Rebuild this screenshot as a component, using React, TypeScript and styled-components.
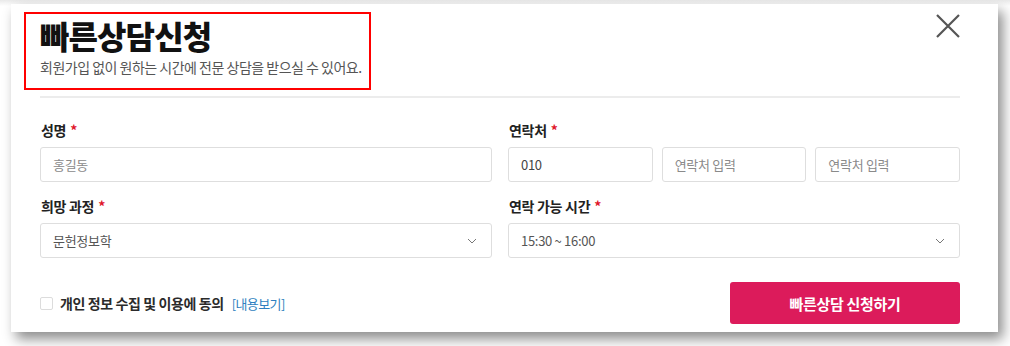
import React from "react";
import styled, { createGlobalStyle } from "styled-components";

const GlobalStyle = createGlobalStyle`
  html, body {
    margin: 0;
    padding: 0;
    background: #ffffff;
    font-family: "Noto Sans CJK KR", "Noto Sans", sans-serif;
  }
  * { box-sizing: border-box; }
`;

const Page = styled.div`
  width: 1010px;
  height: 346px;
  padding: 4px 0 0 11px;
  background: linear-gradient(180deg, #e9e9e9 0px, #ffffff 6px);
`;

const Modal = styled.div`
  position: relative;
  width: 987px;
  height: 328px;
  background: #ffffff;
  padding: 8px 38px 0 29px;
  box-shadow: 5px 7px 12px rgba(0, 0, 0, 0.45);
`;

const Header = styled.div`
  width: 347px;
  height: 78px;
  margin-left: -16px;
  padding: 1px 0 0 14px;
  border: 2px solid #ff0000;
`;

const Title = styled.h2`
  margin: 0;
  font-size: 32px;
  line-height: 40px;
  font-weight: 900;
  letter-spacing: -0.9px;
  color: #111111;
`;

const Subtitle = styled.p`
  margin: 2px 0 0;
  font-size: 14px;
  line-height: 20px;
  letter-spacing: -0.5px;
  color: #555555;
`;

const CloseButton = styled.button`
  position: absolute;
  top: 8px;
  right: 36px;
  width: 28px;
  height: 28px;
  padding: 0;
  border: 0;
  background: none;
  display: flex;
  align-items: center;
  justify-content: center;
`;

const Divider = styled.hr`
  margin: 6px 0 0;
  border: 0;
  border-top: 2px solid #ececec;
`;

const Grid = styled.div`
  display: grid;
  grid-template-columns: 1fr 1fr;
  column-gap: 16px;
  row-gap: 14px;
  margin-top: 22px;
`;

const Field = styled.div`
  display: flex;
  flex-direction: column;
`;

const Label = styled.label`
  font-size: 14px;
  line-height: 20px;
  font-weight: 700;
  color: #222222;
  letter-spacing: -0.3px;
  margin-bottom: 7px;
  margin-left: 1px;
`;

const Required = styled.span`
  color: #e0162b;
  margin-left: 4px;
`;

const InputRow = styled.div`
  display: flex;
  gap: 9px;

  & > * {
    flex: 1;
  }
`;

const Input = styled.div<{ $filled?: boolean }>`
  height: 35px;
  border: 1px solid #dedede;
  border-radius: 3px;
  padding: 0 12px;
  display: flex;
  align-items: center;
  font-size: 13px;
  letter-spacing: -0.3px;
  color: ${(p) => (p.$filled ? "#444444" : "#8a8a8a")};
`;

const Select = styled(Input)`
  justify-content: space-between;
  padding-right: 14px;
  color: #555555;
`;

const Footer = styled.div`
  display: flex;
  align-items: center;
  justify-content: space-between;
  margin-top: 24px;
`;

const Agree = styled.div`
  display: flex;
  align-items: center;
  letter-spacing: -0.4px;
`;

const Checkbox = styled.span`
  width: 13px;
  height: 13px;
  border: 1px solid #dcdcdc;
  border-radius: 2px;
  margin-right: 7px;
  background: #fff;
`;

const AgreeText = styled.span`
  font-size: 14px;
  font-weight: 700;
  color: #2b2b2b;
`;

const MoreLink = styled.a`
  margin-left: 8px;
  font-size: 13px;
  letter-spacing: -0.6px;
  color: #2f7fc0;
  text-decoration: none;
`;

const SubmitButton = styled.button`
  width: 230px;
  height: 42px;
  border: 0;
  border-radius: 3px;
  background: #dc1b5b;
  color: #ffffff;
  font-family: inherit;
  font-size: 15px;
  font-weight: 700;
  letter-spacing: -0.3px;
`;

const Chevron = () => (
  <svg width="10" height="6" viewBox="0 0 10 6" fill="none">
    <path d="M1 1l4 4 4-4" stroke="#777" strokeWidth="1" />
  </svg>
);

const App = () => {
  return (
    <>
      <GlobalStyle />
      <Page>
        <Modal>
          <Header>
            <Title>빠른상담신청</Title>
            <Subtitle>회원가입 없이 원하는 시간에 전문 상담을 받으실 수 있어요.</Subtitle>
          </Header>
          <CloseButton aria-label="닫기">
            <svg width="26" height="26" viewBox="0 0 26 26">
              <path d="M2 2l22 22M24 2L2 24" stroke="#555" strokeWidth="2.2" />
            </svg>
          </CloseButton>
          <Divider />
          <Grid>
            <Field>
              <Label>
                성명<Required>*</Required>
              </Label>
              <Input>홍길동</Input>
            </Field>
            <Field>
              <Label>
                연락처<Required>*</Required>
              </Label>
              <InputRow>
                <Input $filled>010</Input>
                <Input>연락처 입력</Input>
                <Input>연락처 입력</Input>
              </InputRow>
            </Field>
            <Field>
              <Label>
                희망 과정<Required>*</Required>
              </Label>
              <Select>
                문헌정보학
                <Chevron />
              </Select>
            </Field>
            <Field>
              <Label>
                연락 가능 시간<Required>*</Required>
              </Label>
              <Select>
                15:30 ~ 16:00
                <Chevron />
              </Select>
            </Field>
          </Grid>
          <Footer>
            <Agree>
              <Checkbox />
              <AgreeText>개인 정보 수집 및 이용에 동의</AgreeText>
              <MoreLink href="#">[내용보기]</MoreLink>
            </Agree>
            <SubmitButton>빠른상담 신청하기</SubmitButton>
          </Footer>
        </Modal>
      </Page>
    </>
  );
};

export default App;
